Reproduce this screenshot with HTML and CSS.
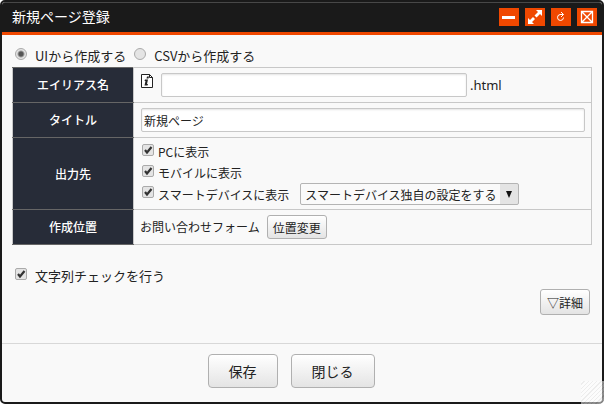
FILE: index.html
```html
<!DOCTYPE html>
<html lang="ja">
<head>
    <meta charset="UTF-8">
    <meta name="viewport" content="width=device-width, initial-scale=1.0">
    <title>新規ページ登録</title>
    <link rel="stylesheet" href="styles.css">
</head>
<body>
    <form class="dialog">
        <header class="dialog-header">
            <h1 class="dialog-title">新規ページ登録</h1>
            <div class="window-buttons">
                <button type="button" class="window-btn" aria-label="最小化">
                    <svg viewBox="0 0 20 18"><path d="M3 8h13v3H3z" fill="#fff"/></svg>
                </button>
                <button type="button" class="window-btn" aria-label="最大化">
                    <svg viewBox="0 0 20 18"><path d="M11 2h6v6l-2-2-3.500 3.500-2-2L13 4zM3 10l2 2 3-3 2 2-3 3 2 2H3z" fill="#fff"/></svg>
                </button>
                <button type="button" class="window-btn" aria-label="更新">
                    <svg viewBox="0 0 20 18"><path d="M12.500 6.500H9A3 3 0 1 0 12.500 9.500M10 4l2.500 2.500L10 9" fill="none" stroke="#fff"/></svg>
                </button>
                <button type="button" class="window-btn" aria-label="閉じる">
                    <svg viewBox="0 0 20 18"><path d="M4.500 3.500h11v11h-11zM5 4l10 10M15 4L5 14" fill="none" stroke="#fff" stroke-width="1.300"/></svg>
                </button>
            </div>
        </header>

        <main class="dialog-body">
            <div class="mode-row">
                <label class="option"><input type="radio" class="radio" name="mode" checked>UIから作成する</label>
                <label class="option"><input type="radio" class="radio" name="mode">CSVから作成する</label>
            </div>

            <table class="form-table">
                <tr>
                    <th scope="row"><label for="alias">エイリアス名</label></th>
                    <td>
                        <div class="field">
                            <svg class="info-icon" viewBox="0 0 12 14">
                                <path d="M.5.5h8l3 3v10H.5z" fill="#fff" stroke="#222"/>
                                <path d="M8.500.5v3h3" fill="none" stroke="#222"/>
                                <path d="M6 2.500h2l-.5 2h-2zM4 5.500h3l-1 4.500h1l-.5 1.500H3.500l1-4.500h-1z" fill="#222"/>
                            </svg>
                            <input type="text" class="text-input alias-input" id="alias">
                            <span class="suffix">.html</span>
                        </div>
                    </td>
                </tr>
                <tr>
                    <th scope="row"><label for="pageTitle">タイトル</label></th>
                    <td>
                        <div class="field">
                            <input type="text" class="text-input" id="pageTitle" value="新規ページ">
                        </div>
                    </td>
                </tr>
                <tr>
                    <th scope="row">出力先</th>
                    <td>
                        <div class="output-list">
                            <label class="output"><input type="checkbox" class="check" checked>PCに表示</label>
                            <label class="output"><input type="checkbox" class="check" checked>モバイルに表示</label>
                            <div class="output-row">
                                <label class="output"><input type="checkbox" class="check" checked>スマートデバイスに表示</label>
                                <select class="select" aria-label="スマートデバイスの設定">
                                    <option>スマートデバイス独自の設定をする</option>
                                </select>
                            </div>
                        </div>
                    </td>
                </tr>
                <tr>
                    <th scope="row">作成位置</th>
                    <td>
                        <div class="position">
                            <span>お問い合わせフォーム</span>
                            <button type="button" class="btn btn-small">位置変更</button>
                        </div>
                    </td>
                </tr>
            </table>

            <div class="check-row">
                <label class="option"><input type="checkbox" class="check" checked>文字列チェックを行う</label>
            </div>
            <div class="detail-row">
                <button type="button" class="btn btn-detail">▽詳細</button>
            </div>
        </main>

        <footer class="dialog-footer">
            <button type="submit" class="btn btn-large">保存</button>
            <button type="button" class="btn btn-large">閉じる</button>
        </footer>
        <div class="resize-handle"></div>
    </form>
</body>
</html>
```
FILE: styles.css
```css
* {
    box-sizing: border-box;
}

body {
    margin: 0;
    background: #fff;
    color: #222;
    font-family: "Noto Sans CJK JP", sans-serif;
    font-size: 12px;
    line-height: 20px;
}

button,
input,
select {
    margin: 0;
    font-family: inherit;
    font-size: inherit;
    color: inherit;
}

.dialog {
    position: relative;
    display: flex;
    flex-direction: column;
    min-height: 100vh;
    border: 2px solid #1a1a1a;
    border-radius: 5px;
    background: #f9f9f9;
}

/* header */
.dialog-header {
    display: flex;
    align-items: center;
    justify-content: space-between;
    height: 33px;
    padding: 0 5px 0 10px;
    border-top: 1px solid #484848;
    border-bottom: 3px solid #f04800;
    border-radius: 3px 3px 0 0;
    background: #1a1a1a;
}

.dialog-title {
    margin: 0 0 4px;
    color: #fff;
    font-size: 14px;
    font-weight: 400;
}

.window-buttons {
    display: flex;
    gap: 6px;
    margin-bottom: 1px;
}

.window-btn {
    width: 20px;
    height: 18px;
    padding: 0;
    border: 0;
    background: #f04800;
    cursor: pointer;
}

.window-btn svg {
    display: block;
}

/* body */
.dialog-body {
    flex: 1;
    padding: 10px;
}

.mode-row {
    display: flex;
    gap: 8px;
    padding-left: 3px;
}

.option {
    display: flex;
    align-items: center;
    gap: 8px;
    font-size: 13px;
    line-height: 22px;
}

.radio,
.check {
    flex: none;
    appearance: none;
    width: 12px;
    height: 12px;
    margin-bottom: 4px;
    border: 1px solid #aaa;
    background: #e4e4e4;
}

.radio {
    border-radius: 50%;
}

.radio:checked {
    background: radial-gradient(circle, #555 0, #555 2px, #e4e4e4 4px);
}

.check {
    border-radius: 2px;
}

.check:checked {
    background: #e4e4e4 url("data:image/svg+xml,%3Csvg xmlns='http://www.w3.org/2000/svg' viewBox='0 0 10 10'%3E%3Cpath d='M2 5l2 2.500L8.500 2' fill='none' stroke='%23333' stroke-width='2.200'/%3E%3C/svg%3E") center / 10px no-repeat;
}

.form-table {
    width: 100%;
    border: 1px solid #c8c8c8;
    border-collapse: collapse;
}

.form-table th,
.form-table td {
    height: 35px;
    padding: 0 6px;
    border: 1px solid #c8c8c8;
}

.form-table th {
    width: 121px;
    border-top-color: #666;
    border-bottom-color: #666;
    background: #272c38;
    color: #fff;
    font-weight: 500;
}

.field {
    display: flex;
    align-items: center;
    gap: 3px;
    padding-left: 1px;
}

.info-icon {
    flex: none;
    align-self: flex-start;
    width: 12px;
    height: 14px;
    margin: 1px 5px 0 0;
}

.text-input {
    flex: 1;
    min-width: 0;
    height: 24px;
    padding: 0 2px;
    border: 1px solid #c8c8c8;
    border-radius: 2px;
    background: #fff;
    box-shadow: inset 0 1px 2px #e4e4e4;
}

.alias-input {
    flex: 0 1 306px;
}

.suffix {
    font-family: "Noto Sans", sans-serif;
    font-size: 13px;
}

.output-list {
    padding: 3px 0 4px 2px;
}

.output {
    display: flex;
    align-items: center;
    gap: 4px;
    line-height: 21px;
}

.output-row {
    display: flex;
    align-items: center;
    gap: 11px;
}

.select {
    appearance: none;
    width: 219px;
    height: 22px;
    padding: 0 20px 0 4px;
    border: 1px solid #b4b4b4;
    border-radius: 2px;
    background:
        url("data:image/svg+xml,%3Csvg xmlns='http://www.w3.org/2000/svg' viewBox='0 0 18 20'%3E%3Cpath fill='%23e4e4e4' d='M0 0h18v20H0z'/%3E%3Cpath d='M6 7h6l-3 7z' fill='%23111'/%3E%3C/svg%3E") right center / 18px 20px no-repeat,
        #fafafa;
}

.position {
    display: flex;
    align-items: center;
    gap: 7px;
}

.btn {
    padding: 0;
    border: 1px solid #b0b0b0;
    border-radius: 3px;
    background: linear-gradient(#fff, #e4e4e4);
    cursor: pointer;
}

.btn-small {
    height: 24px;
    padding: 0 5px;
}

.btn-detail {
    height: 26px;
    padding: 0 6px;
}

.btn-large {
    height: 34px;
    padding: 0 20px;
    border-radius: 4px;
    font-size: 14px;
}

.check-row {
    padding: 20px 0 2px 3px;
}

.detail-row {
    display: flex;
    justify-content: flex-end;
    padding-right: 2px;
}

/* footer */
.dialog-footer {
    display: flex;
    justify-content: center;
    gap: 13px;
    padding: 10px 22px 14px 0;
    border-top: 1px solid #d8d8d8;
}

.resize-handle {
    position: absolute;
    right: -2px;
    bottom: -2px;
    width: 23px;
    height: 23px;
    background: repeating-linear-gradient(135deg, rgba(255, 255, 255, 0.5) 0 2px, rgba(225, 225, 225, 0.5) 2px 3px);
    cursor: nwse-resize;
}
```
